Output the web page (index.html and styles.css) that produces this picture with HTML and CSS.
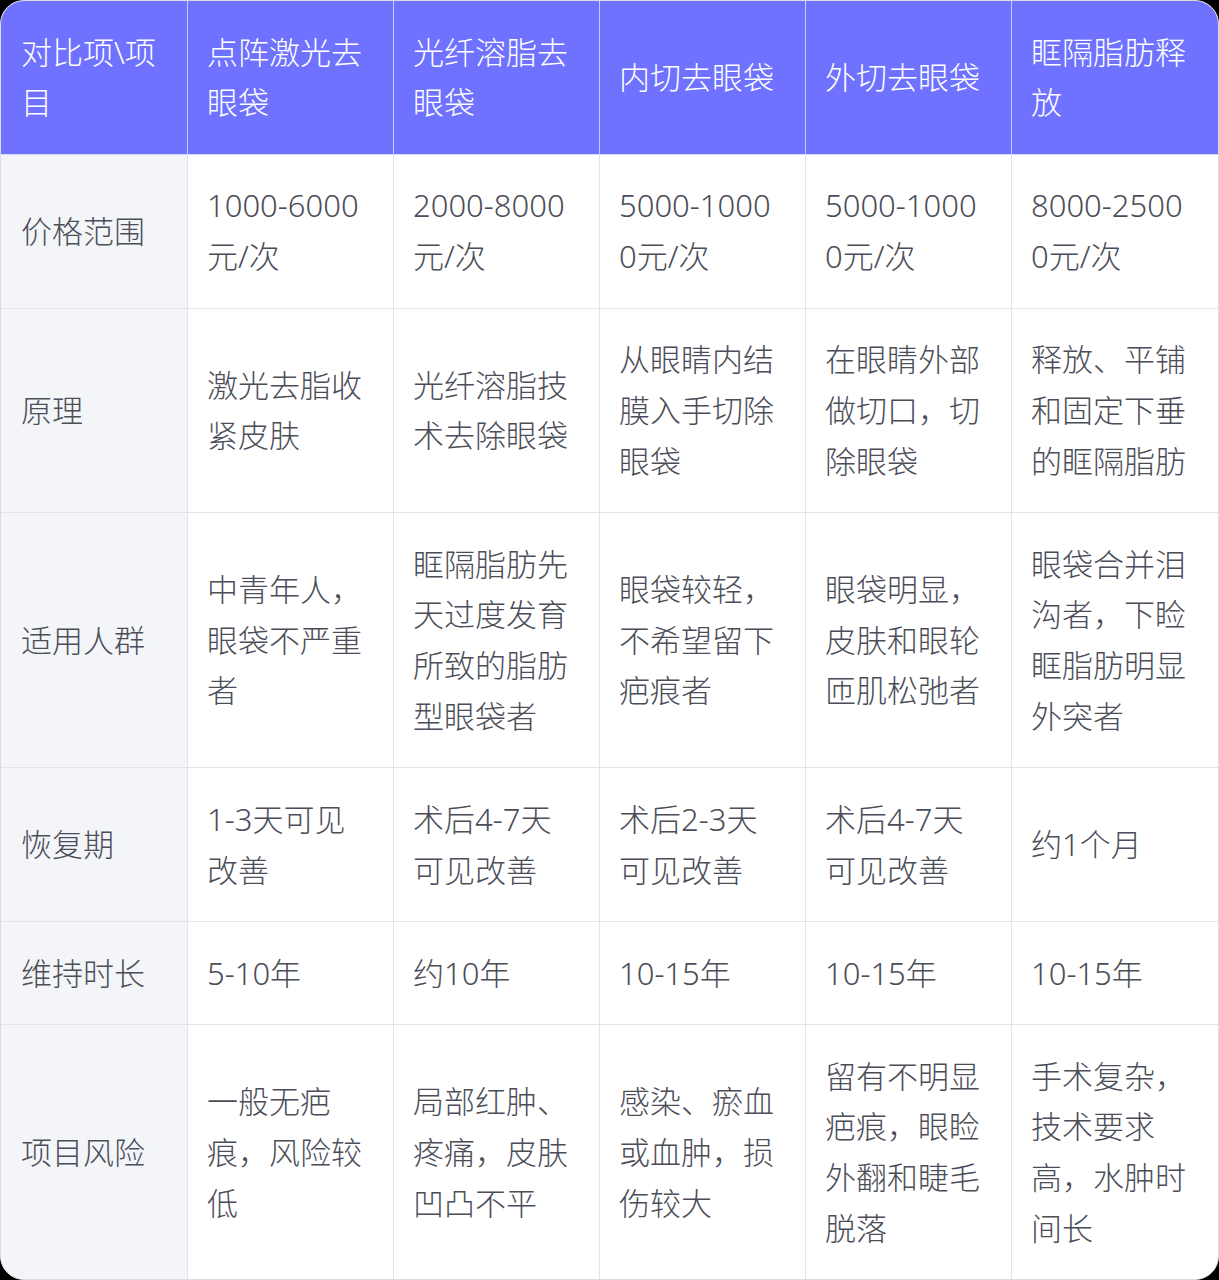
FILE: index.html
```html
<!DOCTYPE html>
<html lang="zh-CN">
<head>
<meta charset="utf-8">
<link rel="stylesheet" href="styles.css">
</head>
<body>
<div class="wrap">
<table class="cmp">
<colgroup>
<col class="c-first"><col class="c"><col class="c"><col class="c"><col class="c"><col class="c-last">
</colgroup>
<thead>
<tr>
<th>对比项\项目</th>
<th>点阵激光去眼袋</th>
<th>光纤溶脂去眼袋</th>
<th>内切去眼袋</th>
<th>外切去眼袋</th>
<th>眶隔脂肪释放</th>
</tr>
</thead>
<tbody>
<tr>
<td class="label">价格范围</td>
<td>1000-6000元/次</td>
<td>2000-8000元/次</td>
<td>5000-10000元/次</td>
<td>5000-10000元/次</td>
<td>8000-25000元/次</td>
</tr>
<tr>
<td class="label">原理</td>
<td>激光去脂收紧皮肤</td>
<td>光纤溶脂技术去除眼袋</td>
<td>从眼睛内结膜入手切除眼袋</td>
<td>在眼睛外部做切口，切除眼袋</td>
<td>释放、平铺和固定下垂的眶隔脂肪</td>
</tr>
<tr>
<td class="label">适用人群</td>
<td>中青年人，眼袋不严重者</td>
<td>眶隔脂肪先天过度发育所致的脂肪型眼袋者</td>
<td>眼袋较轻，不希望留下疤痕者</td>
<td>眼袋明显，皮肤和眼轮匝肌松弛者</td>
<td>眼袋合并泪沟者，下睑眶脂肪明显外突者</td>
</tr>
<tr>
<td class="label">恢复期</td>
<td>1-3天可见改善</td>
<td>术后4-7天可见改善</td>
<td>术后2-3天可见改善</td>
<td>术后4-7天可见改善</td>
<td>约1个月</td>
</tr>
<tr>
<td class="label">维持时长</td>
<td>5-10年</td>
<td>约10年</td>
<td>10-15年</td>
<td>10-15年</td>
<td>10-15年</td>
</tr>
<tr>
<td class="label">项目风险</td>
<td>一般无疤痕，风险较低</td>
<td>局部红肿、疼痛，皮肤凹凸不平</td>
<td>感染、瘀血或血肿，损伤较大</td>
<td>留有不明显疤痕，眼睑外翻和睫毛脱落</td>
<td>手术复杂，技术要求高，水肿时间长</td>
</tr>
</tbody>
</table>
</div>
</body>
</html>
```

FILE: styles.css
```css
html, body {
  margin: 0;
  padding: 0;
  background: #000;
}
.wrap {
  width: 1217px;
  border: 1px solid #dcdde3;
  border-radius: 24px;
  overflow: hidden;
  background: #fff;
}
.cmp {
  width: 1217px;
  table-layout: fixed;
  border-collapse: separate;
  border-spacing: 0;
  font-family: "Noto Sans", "Noto Sans CJK SC", sans-serif;
  font-size: 31px;
  font-weight: 300;
  line-height: 50.7px;
  color: #4b4e58;
}
.c-first { width: 187px; }
.c { width: 206px; }
.c-last { width: 206px; }
.cmp th, .cmp td {
  padding: 25.7px 19px 25.7px 19px;
  text-align: left;
  vertical-align: middle;
  word-break: break-all;
  border-right: 1px solid #e3e4e9;
  border-bottom: 1px solid #e3e4e9;
}
.cmp th:first-child, .cmp td:first-child {
  padding-left: 20px;
}
.cmp th:last-child, .cmp td:last-child {
  border-right: none;
}
.cmp tbody tr:last-child td {
  border-bottom: none;
}
.cmp th {
  background: #6e72ff;
  color: #fff;
  font-weight: 300;
  border-right-color: #c9cbfb;
  border-bottom-color: #d5d6f5;
}
.cmp td.label {
  background: #f4f5f9;
}
```
